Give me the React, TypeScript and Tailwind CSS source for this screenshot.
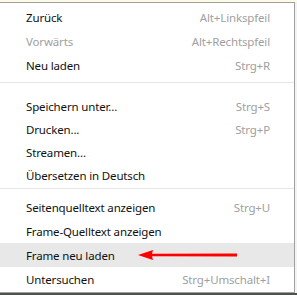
import React from "react";

type Item = { label: string; shortcut?: string; disabled?: boolean; active?: boolean };

const sections: { rowH: string; items: Item[] }[] = [
  {
    rowH: "h-6",
    items: [
      { label: "Zurück", shortcut: "Alt+Linkspfeil" },
      { label: "Vorwärts", shortcut: "Alt+Rechtspfeil", disabled: true },
      { label: "Neu laden", shortcut: "Strg+R" },
    ],
  },
  {
    rowH: "h-[23px]",
    items: [
      { label: "Speichern unter...", shortcut: "Strg+S" },
      { label: "Drucken...", shortcut: "Strg+P" },
      { label: "Streamen..." },
      { label: "Übersetzen in Deutsch" },
    ],
  },
  {
    rowH: "h-6",
    items: [
      { label: "Seitenquelltext anzeigen", shortcut: "Strg+U" },
      { label: "Frame-Quelltext anzeigen" },
      { label: "Frame neu laden", active: true },
      { label: "Untersuchen", shortcut: "Strg+Umschalt+I" },
    ],
  },
];

function Row({ item, rowH }: { item: Item; rowH: string }) {
  return (
    <div
      className={`${rowH} flex items-center justify-between pl-[26px] pr-[24px] pt-px ${
        item.active ? "bg-[#e8e8e8]" : ""
      }`}
    >
      <span className={item.disabled ? "text-[#a0a0a0]" : "text-[#111]"}>{item.label}</span>
      {item.shortcut && <span className="text-[#a0a0a0]">{item.shortcut}</span>}
    </div>
  );
}

export default function App() {
  return (
    <div
      className="w-[297px] h-[295px] bg-[#fdfae6] flex flex-col text-[11.5px] tracking-[-0.15px] leading-none"
      style={{ fontFamily: '"Noto Sans", "DejaVu Sans", sans-serif' }}
    >
      <div className="h-[2px]" />
      <div className="flex flex-1">
        <div className="relative w-[295px] flex flex-col border-t border-r border-b border-[#a0a0a0] bg-white pt-[2px]">
          {sections[0].items.map((it) => (
            <Row key={it.label} item={it} rowH={sections[0].rowH} />
          ))}
          <div className="mt-[5px] mb-[12px] h-px bg-[#e6e6e6]" />
          {sections[1].items.map((it) => (
            <Row key={it.label} item={it} rowH={sections[1].rowH} />
          ))}
          <div className="mt-px mb-[6px] h-px bg-[#e6e6e6]" />
          {sections[2].items.map((it) => (
            <Row key={it.label} item={it} rowH={sections[2].rowH} />
          ))}

          {/* red annotation arrow */}
          <svg
            className="absolute left-[136px] top-[245px]"
            width="104"
            height="14"
            viewBox="0 0 104 14"
          >
            <path d="M2 7 L17 2 L16 5.8 L101 5.5 L101 8.5 L16 8.2 L17 12 Z" fill="#ff0000" />
          </svg>
        </div>
        <div className="w-[2px] bg-[#f3f3f3]" />
      </div>
      <div className="h-[2px] bg-[#4b524b]" />
    </div>
  );
}
